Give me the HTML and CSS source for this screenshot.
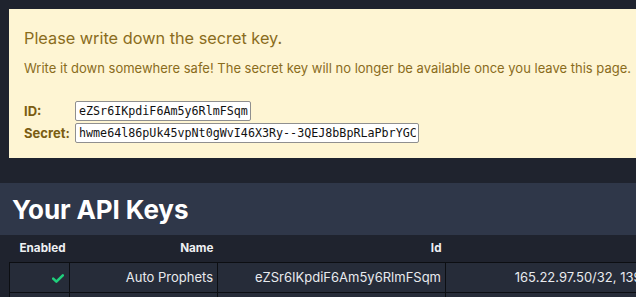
FILE: index.html
```html
<!DOCTYPE html>
<html>
<head>
<meta charset="utf-8">
<link rel="stylesheet" href="styles.css">
</head>
<body>
<div class="page">
  <div class="alert">
    <h2 class="alert-title">Please write down the secret key.</h2>
    <p class="alert-text">Write it down somewhere safe! The secret key will no longer be available once you leave this page.</p>
    <div class="creds">
      <label class="cred-label">ID:</label>
      <input class="cred-input id-input" type="text" value="eZSr6IKpdiF6Am5y6RlmFSqm" readonly>
      <label class="cred-label">Secret:</label>
      <input class="cred-input secret-input" type="text" value="hwme64l86pUk45vpNt0gWvI46X3Ry--3QEJ8bBpRLaPbrYGC" readonly>
    </div>
  </div>
  <div class="section-head">
    <h1 class="section-title">Your API Keys</h1>
  </div>
  <table class="keys">
    <colgroup>
      <col class="w-enabled">
      <col class="w-name">
      <col class="w-id">
      <col class="w-ips">
    </colgroup>
    <thead>
      <tr>
        <th>Enabled</th>
        <th>Name</th>
        <th>Id</th>
        <th></th>
      </tr>
    </thead>
    <tbody>
      <tr>
        <td><svg class="check" width="12" height="9" viewBox="0 0 12 9"><path d="M1.2 4.6 L4.4 7.6 L10.8 1.4" fill="none" stroke="#1fcf7c" stroke-width="2.6" stroke-linecap="round" stroke-linejoin="round"/></svg></td>
        <td>Auto Prophets</td>
        <td>eZSr6IKpdiF6Am5y6RlmFSqm</td>
        <td>165.22.97.50/32, 139.59.130.4/32</td>
      </tr>
      <tr>
        <td>&nbsp;</td>
        <td>&nbsp;</td>
        <td>&nbsp;</td>
        <td>&nbsp;</td>
      </tr>
    </tbody>
  </table>
</div>
</body>
</html>
```

FILE: styles.css
```css
html, body {
  margin: 0;
  padding: 0;
  background: #1f232e;
  overflow: hidden;
}
body {
  font-family: Inter, "Noto Sans", sans-serif;
  width: 636px;
  height: 297px;
}
.page {
  padding-top: 9px;
}
.alert {
  margin-left: 9px;
  width: 700px;
  background: #fef5d3;
  color: #8a6c1c;
  padding: 17px 15px 13px 15px;
  box-sizing: border-box;
  height: 149px;
}
.alert-title {
  margin: 0;
  font-size: 16.3px;
  font-weight: 400;
  line-height: 24px;
}
.alert-text {
  margin: 9px 0 0 0;
  font-size: 13px;
  line-height: 18px;
}
.creds {
  display: grid;
  grid-template-columns: 51px auto;
  justify-items: start;
  align-items: center;
  row-gap: 2px;
  margin-top: 24px;
}
.cred-label {
  font-weight: 700;
  font-size: 13px;
  color: #7b5d12;
}
.cred-input {
  font-family: "DejaVu Sans Mono", monospace;
  font-size: 11.7px;
  height: 20px;
  box-sizing: border-box;
  border: 1px solid #8f8f8f;
  border-radius: 2px;
  background: #fff;
  color: #111;
  padding: 0 2px 0 3px;
  outline: none;
}
.id-input { width: 176px; }
.secret-input { width: 344px; }
.section-head {
  margin-top: 25px;
  background: #2f3749;
  height: 52px;
  display: flex;
  align-items: center;
  padding-left: 12px;
}
.section-title {
  margin: 0;
  color: #ffffff;
  font-size: 26px;
  font-weight: 700;
  letter-spacing: -0.1px;
}
.keys {
  margin-left: 9px;
  border-collapse: collapse;
  table-layout: fixed;
  width: 712px;
  color: #e8eaee;
  font-size: 13px;
}
.w-enabled { width: 60px; }
.w-name { width: 148px; }
.w-id { width: 228px; }
.w-ips { width: 276px; }
.keys th {
  font-weight: 700;
  font-size: 11.7px;
  text-align: right;
  height: 27px;
  padding: 0 4px;
  color: #eef0f3;
  box-sizing: border-box;
}
.keys td {
  text-align: right;
  height: 30px;
  padding: 0 4px;
  border: 1px solid #0c0e12;
  background: #262c39;
  box-sizing: border-box;
  white-space: nowrap;
  overflow: hidden;
}
.check { vertical-align: middle; margin-right: 1px; }
```
